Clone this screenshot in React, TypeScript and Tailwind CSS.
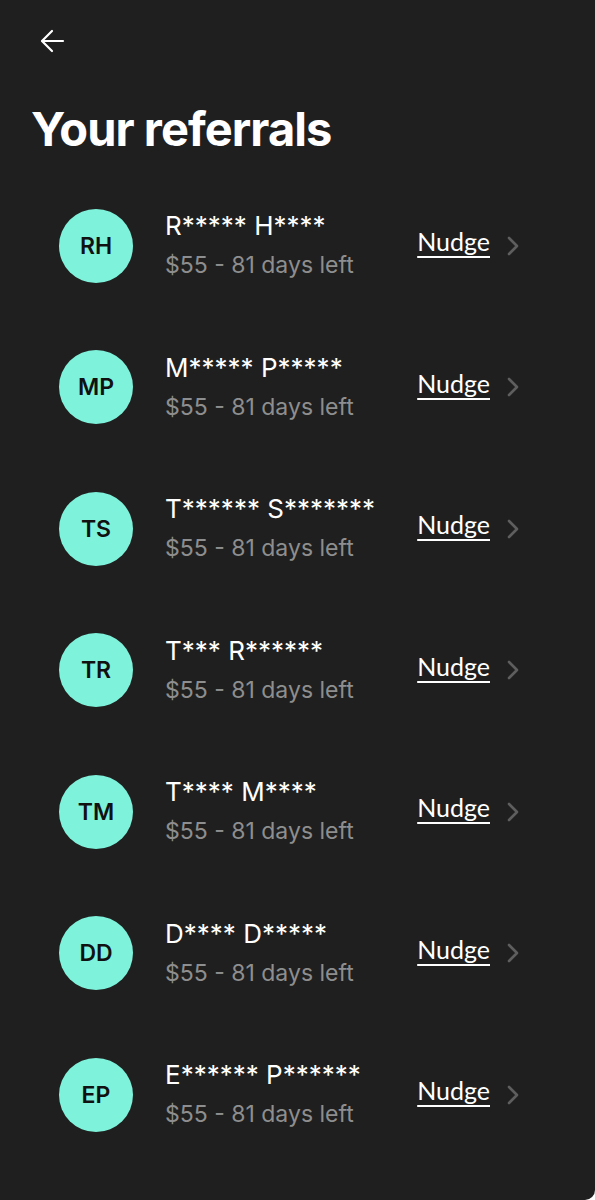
const referrals = [
  { initials: "RH", name: "R***** H****" },
  { initials: "MP", name: "M***** P*****" },
  { initials: "TS", name: "T****** S*******" },
  { initials: "TR", name: "T*** R******" },
  { initials: "TM", name: "T**** M****" },
  { initials: "DD", name: "D**** D*****" },
  { initials: "EP", name: "E****** P******" },
];

function BackArrow() {
  return (
    <svg width="25" height="24" viewBox="0 0 25 24" fill="none" stroke="white" strokeWidth="2.2" strokeLinecap="round" strokeLinejoin="round">
      <path d="M23 12H2.5" />
      <path d="M12 2L2 12l10 10" />
    </svg>
  );
}

function Chevron() {
  return (
    <svg width="12" height="20" viewBox="0 0 12 20" fill="none" stroke="#5e5e5e" strokeWidth="2.6" strokeLinecap="round" strokeLinejoin="round">
      <path d="M2 2l8 8-8 8" />
    </svg>
  );
}

function ReferralRow({ initials, name }: { initials: string; name: string }) {
  return (
    <div className="flex h-[141.5px] items-center pl-[59px]">
      <div className="flex h-[74px] w-[74px] shrink-0 items-center justify-center rounded-full bg-[#7ef2da] font-['Inter',sans-serif] text-[23px] font-semibold text-[#111]">
        {initials}
      </div>
      <div className="ml-[32px] flex flex-1 flex-col font-['Inter',sans-serif]">
        <span className="-mt-[2px] text-[26px] leading-[32px] text-white">{name}</span>
        <span className="mt-[9px] text-[23px] leading-[28px] text-[#8e8e8e]">$55 - 81 days left</span>
      </div>
      <a href="#" className="-mt-[8px] font-['Lato',sans-serif] text-[25px] text-white underline decoration-[2px] underline-offset-[5px]">
        Nudge
      </a>
      <div className="ml-[17px] mr-[76px] flex items-center">
        <Chevron />
      </div>
    </div>
  );
}

export default function App() {
  return (
    <div className="min-h-[1200px] w-[595px] overflow-hidden rounded-br-[10px] bg-[#1f1f1f]">
      <div className="px-[31px]">
        <div className="pl-[9px] pt-[29px]">
          <BackArrow />
        </div>
        <h1 className="mt-[48px] font-['Inter',sans-serif] text-[47px] font-bold leading-[56px] tracking-[-0.02em] text-white">
          Your referrals
        </h1>
      </div>
      <div className="mt-[18px]">
        {referrals.map((r) => (
          <ReferralRow key={r.initials} {...r} />
        ))}
      </div>
    </div>
  );
}
